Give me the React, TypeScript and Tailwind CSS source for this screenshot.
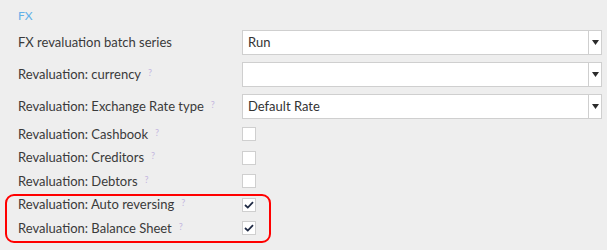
import React from "react";

const font = { fontFamily: 'Lato, "Open Sans", sans-serif' };

function Help() {
  return <sup className="ml-[7px] text-[9px] text-[#c4b6df] relative -top-[3px]">?</sup>;
}

function SelectRow({ label, value, help }: { label: string; value: string; help?: boolean }) {
  return (
    <div className="flex items-center h-[25px]">
      <div className="w-[224px] text-[13px] text-[#3a3a3a]">
        {label}
        {help && <Help />}
      </div>
      <div className="flex w-[360px] h-[25px] bg-white border border-[#cfcfcf]">
        <div className="flex-1 flex items-center pl-[5px] text-[13px] text-[#333]">{value}</div>
        <div className="w-[13px] border-l border-[#cfcfcf] flex items-center justify-center">
          <svg width="7" height="5" viewBox="0 0 7 5">
            <path d="M0 0 L7 0 L3.5 5 Z" fill="#2b2b2b" />
          </svg>
        </div>
      </div>
    </div>
  );
}

function CheckRow({ label, checked }: { label: string; checked?: boolean }) {
  return (
    <div className="flex items-center h-[23.5px]">
      <div className="w-[224px] text-[13px] text-[#3a3a3a]">
        {label}
        <Help />
      </div>
      <div className="w-[14px] h-[14px] bg-white border border-[#cfcfcf] flex items-center justify-center">
        {checked && (
          <svg width="10" height="8" viewBox="0 0 10 8">
            <path d="M1 4 L3.8 6.6 L9 1.2" fill="none" stroke="#1f2a44" strokeWidth="1.8" />
          </svg>
        )}
      </div>
    </div>
  );
}

export default function App() {
  return (
    <div className="relative w-[607px] h-[250px] bg-[#eeeeee] pl-[18px] pt-[7px]" style={font}>
      <div className="text-[12px] text-[#62b0e8] h-[23px]">FX</div>
      <div className="flex flex-col gap-[7px]">
        <SelectRow label="FX revaluation batch series" value="Run" />
        <SelectRow label="Revaluation: currency" value="" help />
        <SelectRow label="Revaluation: Exchange Rate type" value="Default Rate" help />
      </div>
      <div className="mt-[3.5px]">
        <CheckRow label="Revaluation: Cashbook" />
        <CheckRow label="Revaluation: Creditors" />
        <CheckRow label="Revaluation: Debtors" />
        <CheckRow label="Revaluation: Auto reversing" checked />
        <CheckRow label="Revaluation: Balance Sheet" checked />
      </div>
      <div className="absolute left-[5px] top-[194px] w-[266px] h-[49px] border-2 border-[#ff0000] rounded-[9px]" />
    </div>
  );
}
